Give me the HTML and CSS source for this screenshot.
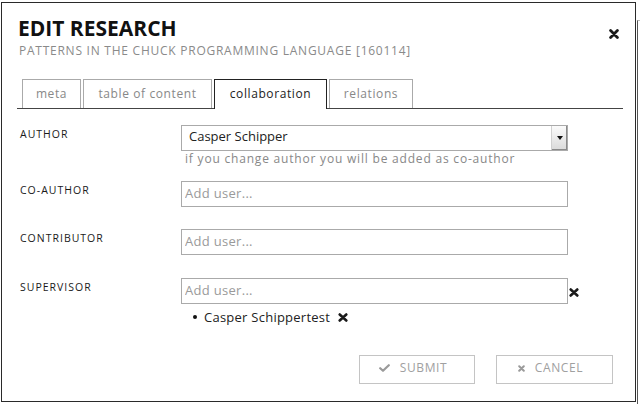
FILE: index.html
```html
<!DOCTYPE html>
<html lang="en">
<head>
<meta charset="utf-8">
<title>Edit research</title>
<link rel="stylesheet" href="styles.css">
</head>
<body>
<div class="page"><div class="page-edge"></div></div>

<div class="modal">
  <header class="head">
    <div class="titles">
      <h1 class="title">EDIT RESEARCH</h1>
      <p class="subtitle">PATTERNS IN THE CHUCK PROGRAMMING LANGUAGE [160114]</p>
    </div>
    <span class="close" aria-label="close">
      <svg class="icon-x" width="10" height="10" viewBox="0 0 10 10"><path d="M1.6 1.6L8.4 8.4M8.4 1.6L1.6 8.4" stroke="#1a1a1a" stroke-width="2.8" stroke-linecap="round"/></svg>
    </span>
  </header>

  <ul class="tabs">
    <li class="tab tab-meta">meta</li>
    <li class="tab tab-toc">table of content</li>
    <li class="tab tab-collab tab-active">collaboration</li>
    <li class="tab tab-rel">relations</li>
  </ul>

  <form class="form">
    <div class="row row-author">
      <label class="label">AUTHOR</label>
      <div class="field">
        <div class="select">
          <span class="select-value">Casper Schipper</span>
          <span class="select-btn"><span class="caret"></span></span>
        </div>
        <p class="help">if you change author you will be added as co-author</p>
      </div>
    </div>

    <div class="row row-coauthor">
      <label class="label">CO-AUTHOR</label>
      <div class="field">
        <input class="input" type="text" placeholder="Add user...">
      </div>
    </div>

    <div class="row row-contrib">
      <label class="label">CONTRIBUTOR</label>
      <div class="field">
        <input class="input" type="text" placeholder="Add user...">
      </div>
    </div>

    <div class="row row-super">
      <label class="label">SUPERVISOR</label>
      <div class="field">
        <div class="input-wrap">
          <input class="input" type="text" placeholder="Add user...">
          <svg class="remove" width="10" height="9" viewBox="0 0 10 9"><path d="M1.7 1.5L8.3 7.5M8.3 1.5L1.7 7.5" stroke="#1a1a1a" stroke-width="2.6" stroke-linecap="round"/></svg>
        </div>
        <ul class="users">
          <li class="user">Casper Schippertest
            <svg class="user-x" width="10" height="9" viewBox="0 0 10 9"><path d="M1.7 1.5L8.3 7.5M8.3 1.5L1.7 7.5" stroke="#1a1a1a" stroke-width="2.6" stroke-linecap="round"/></svg>
          </li>
        </ul>
      </div>
    </div>

    <div class="actions">
      <button type="button" class="btn btn-submit">
        <svg width="11" height="8" viewBox="0 0 11 8"><path d="M1.2 4.2L4 6.8L9.8 1.2" fill="none" stroke="#9a9a9a" stroke-width="2.2" stroke-linecap="round" stroke-linejoin="round"/></svg>
        <span>SUBMIT</span>
      </button>
      <button type="button" class="btn btn-cancel">
        <svg width="7" height="7" viewBox="0 0 7 7"><path d="M1.2 1.2L5.8 5.8M5.8 1.2L1.2 5.8" stroke="#9a9a9a" stroke-width="2" stroke-linecap="round"/></svg>
        <span>CANCEL</span>
      </button>
    </div>
  </form>
</div>
</body>
</html>
```

FILE: styles.css
```css
* { box-sizing: border-box; }

body {
  margin: 0;
  font-family: "Open Sans", "Noto Sans", sans-serif;
  background: #fff;
  color: #222;
}

.page {
  height: 404px;
  display: flex;
  justify-content: flex-end;
}

.page-edge {
  width: 3px;
  margin-top: 20px;
  border-left: 1px solid #555;
  border-top: 1px solid #bbb;
}

.modal {
  position: absolute;
  top: 2px;
  left: 1px;
  width: 635px;
  height: 400px;
  border: 1px solid #2a2a2a;
  background: #fff;
  padding: 13px 16px 0 16px;
}

.head {
  display: flex;
  justify-content: space-between;
  align-items: flex-start;
}

.title {
  margin: 0;
  font-size: 21px;
  line-height: 24px;
  font-weight: 700;
  color: #111;
}

.subtitle {
  margin: 3px 0 0 1px;
  font-size: 12px;
  line-height: 16px;
  letter-spacing: 0.75px;
  color: #8a8a8a;
}

.close {
  display: block;
  margin-top: 13px;
  width: 10px;
  height: 10px;
}

.icon-x { display: block; }

.tabs {
  list-style: none;
  margin: 20px -4px 0 -1px;
  padding: 0 0 0 5px;
  display: flex;
  gap: 2px;
  border-bottom: 1px solid #444;
}

.tab {
  border: 1px solid #aaa;
  border-bottom: 0;
  padding: 6px 0 6px;
  text-align: center;
  font-size: 12px;
  line-height: 16px;
  letter-spacing: 0.6px;
  color: #888;
  background: #fff;
}

.tab-meta { width: 59px; }
.tab-toc { width: 129px; }
.tab-collab { width: 113px; }
.tab-rel { width: 84px; }

.tab-active {
  border-color: #222;
  color: #222;
  margin-bottom: -1px;
  padding-bottom: 7px;
}

.form {
  margin-top: 16px;
}

.row {
  display: grid;
  grid-template-columns: 163px 387px;
}

.row-coauthor { margin-top: 14px; }
.row-contrib { margin-top: 22px; }
.row-super { margin-top: 23px; }

.label {
  padding: 1px 0 0 2px;
  font-size: 10.5px;
  line-height: 16px;
  font-weight: 500;
  letter-spacing: 1px;
  color: #1a1a1a;
}

.select {
  display: flex;
  height: 26px;
  border: 1px solid #aaa;
  background: #fff;
}

.select-value {
  flex: 1;
  padding: 2px 0 6px 7px;
  font-size: 13px;
  line-height: 16px;
  color: #222;
}

.select-btn {
  width: 16px;
  display: flex;
  align-items: center;
  justify-content: center;
  background: linear-gradient(#fbfbfb, #dadada);
  border-left: 1px solid #d0d0d0;
  box-shadow: inset -1px -1px 0 #8a8a8a;
}

.caret {
  width: 0;
  height: 0;
  border-left: 3px solid transparent;
  border-right: 3px solid transparent;
  border-top: 4px solid #111;
}

.help {
  margin: 0;
  padding-left: 4px;
  font-size: 12px;
  line-height: 16px;
  letter-spacing: 0.8px;
  color: #888;
}

.input {
  display: block;
  flex: none;
  width: 387px;
  height: 26px;
  margin: 0;
  border: 1px solid #aaa;
  padding: 3px 0 5px 3px;
  font-family: "Open Sans", "Noto Sans", sans-serif;
  font-size: 13px;
  line-height: 16px;
  letter-spacing: 0.3px;
  color: #222;
  background: #fff;
  outline: none;
}

.input::placeholder { color: #9a9a9a; }

.input-wrap {
  display: flex;
  align-items: flex-start;
  width: 400px;
}

.remove {
  display: block;
  flex: none;
  margin: 10px 0 0 1px;
}

.users {
  list-style: none;
  margin: 5px 0 0;
  padding: 0 0 0 12px;
}

.user {
  display: flex;
  align-items: center;
  font-size: 13px;
  line-height: 16px;
  letter-spacing: 0.25px;
  color: #222;
}

.user::before {
  content: "";
  width: 4px;
  height: 4px;
  border-radius: 50%;
  background: #111;
  margin-right: 7px;
}

.user-x {
  display: block;
  margin-left: 8px;
}

.actions {
  display: flex;
  justify-content: flex-end;
  gap: 21px;
  margin: 30px 6px 0 0;
}

.btn {
  height: 29px;
  border: 1px solid #c4c4c4;
  background: #fff;
  display: flex;
  align-items: center;
  justify-content: center;
  gap: 10px;
  padding: 0 8px 3px 0;
  font-family: "Open Sans", "Noto Sans", sans-serif;
  font-size: 12px;
  line-height: 16px;
  letter-spacing: 0.6px;
  color: #a0a0a0;
}

.btn svg { display: block; flex: none; }

.btn-submit { width: 116px; }
.btn-cancel { width: 117px; }
```
